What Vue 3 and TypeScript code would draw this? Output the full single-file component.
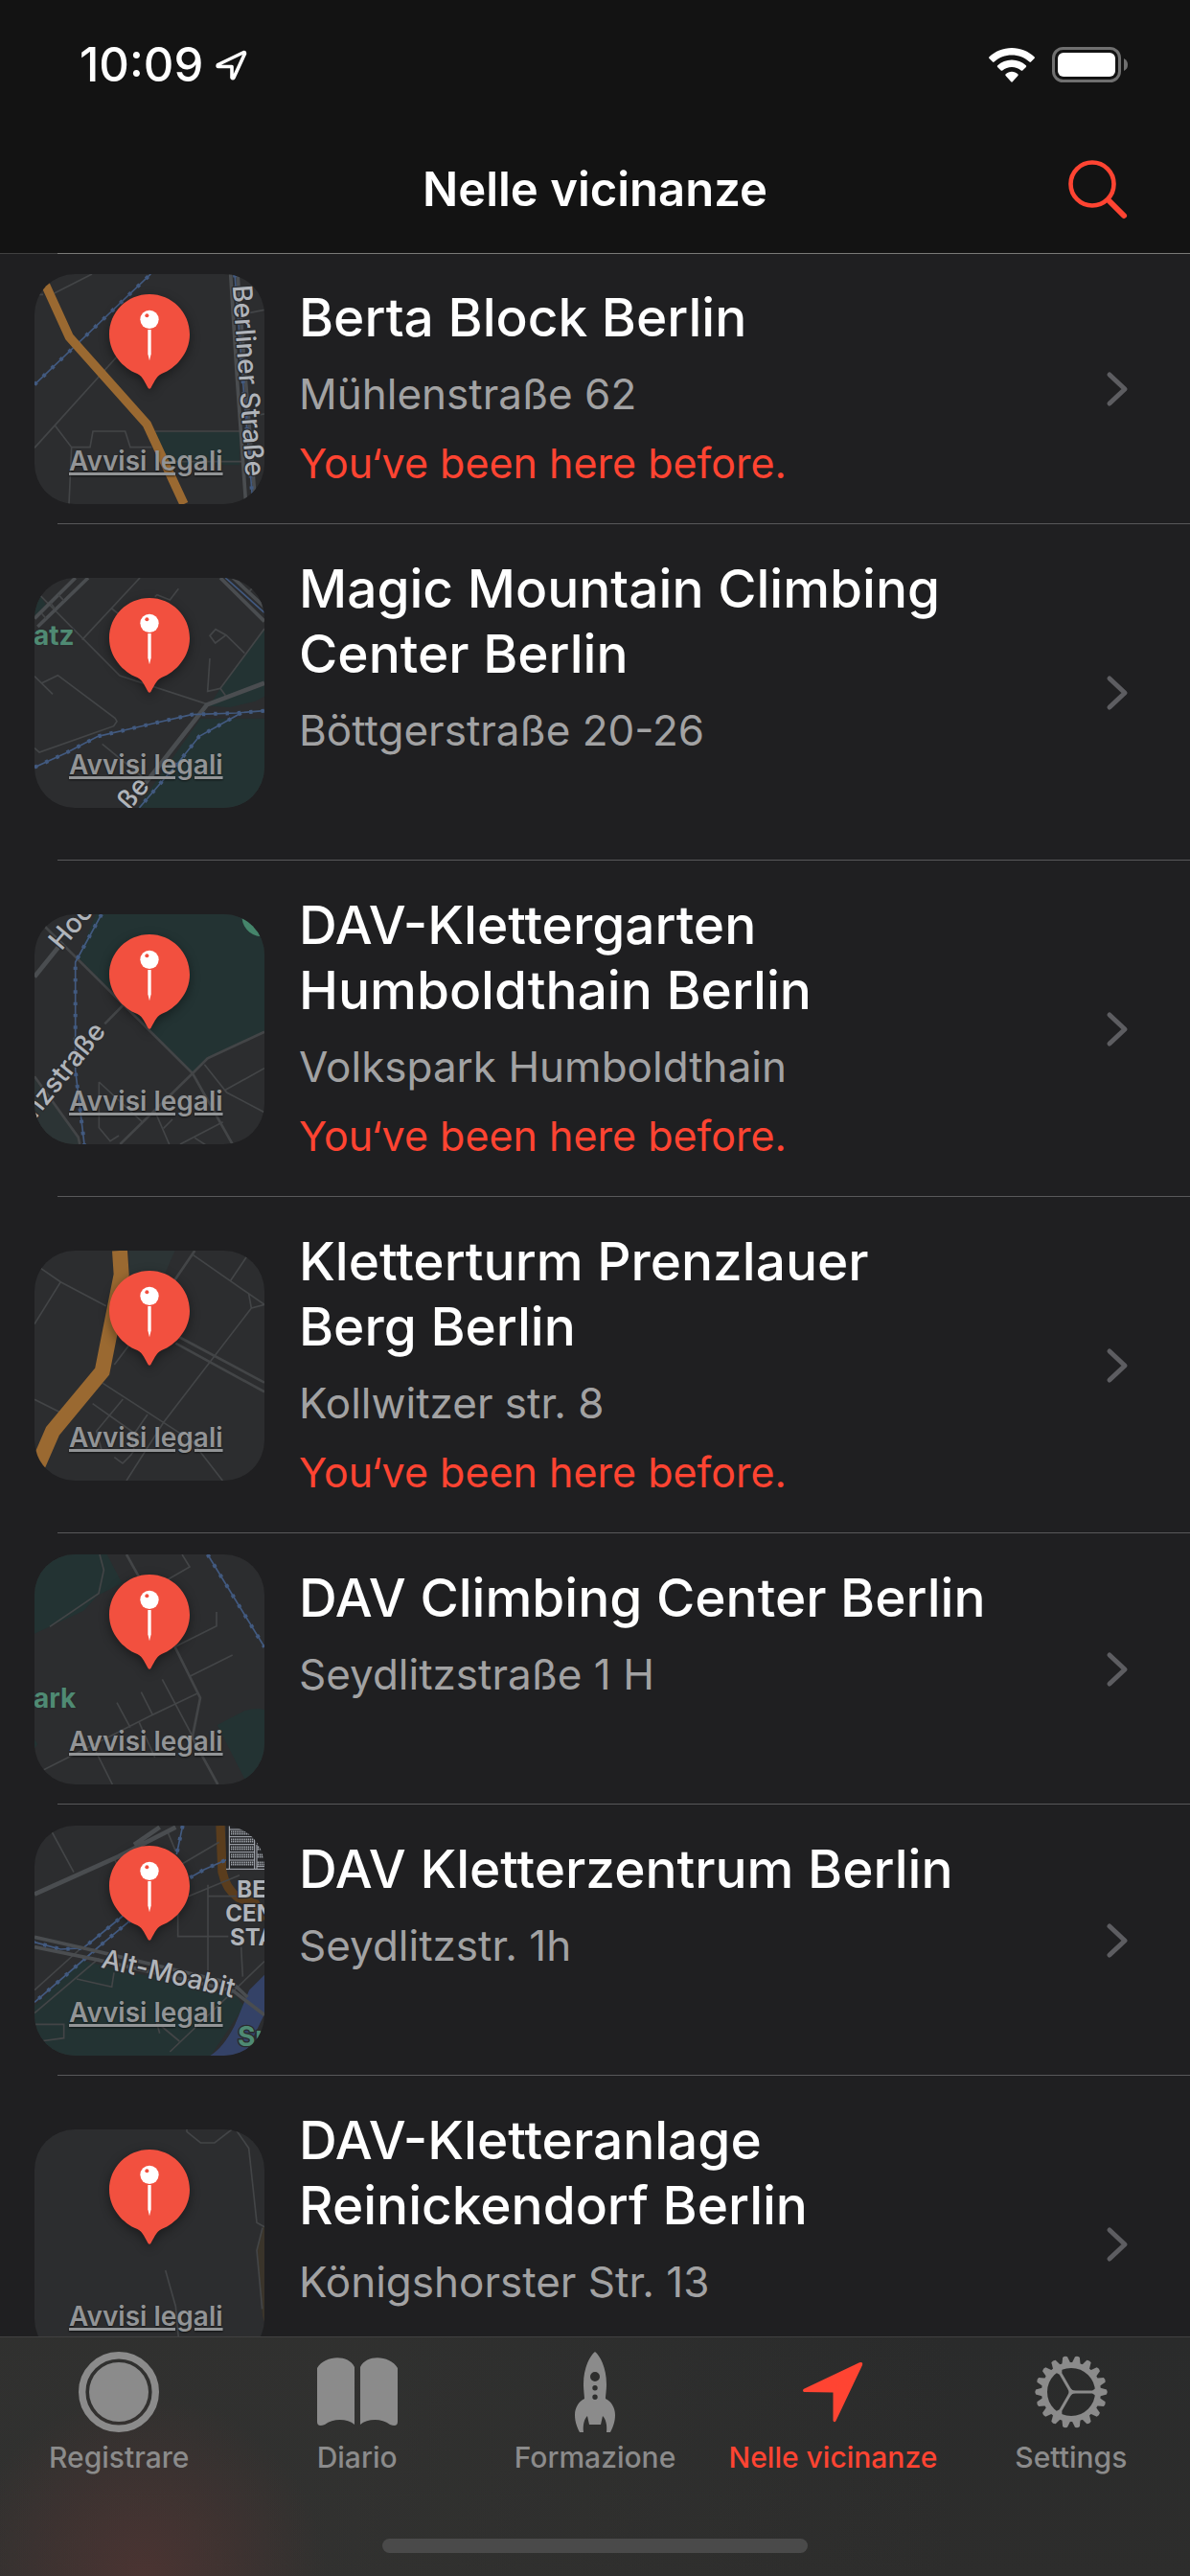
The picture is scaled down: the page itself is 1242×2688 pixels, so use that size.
<script setup lang="ts">
interface Shape {
  kind: string
  d: string
}
interface MapLabel {
  text: string
  x: number
  y: number
  angle: number
  kind: string
}
interface Place {
  lines: string[]
  address: string
  visited: boolean
  top: number
  shapes: Shape[]
  labels: MapLabel[]
}

// A rail line is a thin stroke with evenly spaced ticks laid over it.
const rail = (d: string): Shape[] => [
  { kind: 'rail', d },
  { kind: 'ticks', d },
]

const windows = (x0: number, x1: number, y0: number, y1: number): string => {
  let d = ''
  for (let y = y0; y < y1; y += 24) {
    d += `M${x0} ${y}H${x1}M${x0} ${y + 7}H${x1}`
  }
  return d
}

const places: Place[] = [
  {
    lines: ['Berta Block Berlin'],
    address: 'Mühlenstraße 62',
    visited: true,
    top: 78,
    shapes: [
      { kind: 'green', d: 'M480 572H750V676H530Z' },
      { kind: 'minor', d: 'M108 142H135M170 138L288 78M108 622L372 330M172 552L224 620H282L291 570H392L408 620H475M224 620L216 798M486 570H752M540 665H760M782 199L828 190M815 518L828 516' },
      { kind: 'major', d: 'M722 78L742 400L770 798M744 78L770 420L800 798' },
      ...rail('M108 424L472 78'),
      ...rail('M735 78L762 430L792 798'),
      { kind: 'orange', d: 'M140 106L217 275L460 548L576 798' },
    ],
    labels: [{ text: 'Berliner Straße', x: 728, y: 114, angle: 86, kind: 'street' }],
  },
  {
    lines: ['Magic Mountain Climbing', 'Center Berlin'],
    address: 'Böttgerstraße 20-26',
    visited: false,
    top: 69,
    shapes: [
      { kind: 'green', d: 'M108 115L123 121L144 152L108 190ZM828 228L690 415L655 470L720 474L800 455L828 440ZM628 509H828V789H430Z' },
      { kind: 'minor', d: 'M123 121L375 375L645 463M438 69L257 263M350 165L400 205M485 128L492 122L532 138L559 103M828 228L690 415L706 437M690 415L650 424L657 321M766 305L708 248L675 230L657 250L674 273L708 248M108 377L165 433M131 398L181 374L360 508L366 518L356 533L123 615L108 602M320 589L462 705M780 112L794 97' },
      { kind: 'major', d: 'M236 69L108 196M276 69L118 222M690 69L828 205M730 69L828 160' },
      { kind: 'wide', d: 'M828 398L648 466L452 716' },
      { kind: 'minor', d: 'M183 122L200 140M158 148L172 165M130 180L144 196' },
      ...rail('M108 662L205 618L307 565L440 534L600 497L740 492L828 485'),
      ...rail('M755 492L624 565L560 645L436 789'),
      { kind: 'rail', d: 'M706 69L828 178' },
    ],
    labels: [
      { text: 'atz', x: 105, y: 280, angle: 0, kind: 'park' },
      { text: 'ße', x: 404, y: 800, angle: -49, kind: 'street' },
    ],
  },
  {
    lines: ['DAV-Klettergarten', 'Humboldthain Berlin'],
    address: 'Volkspark Humboldthain',
    visited: true,
    top: 72,
    shapes: [
      { kind: 'green', d: 'M300 72H828V440L650 523L603 570L245 208Z' },
      { kind: 'faint', d: 'M108 580L245 770L250 792H108Z' },
      { kind: 'poi', d: 'M758 72H828V141A62 62 0 0 1 758 86Z' },
      { kind: 'road', d: 'M135 105L603 570L728 792M828 440L650 523L603 570L376 792M328 415L385 357M108 580L245 770L250 792' },
      { kind: 'wide', d: 'M108 268L195 160' },
      { kind: 'minor', d: 'M640 542L710 630L828 692M706 622L828 554M310 597V740L345 782L372 765M310 597L445 722M485 688L530 792M512 742L540 714M564 792L698 722M610 772L644 794' },
      ...rail('M318 72L236 222V560L264 792'),
    ],
    labels: [
      { text: 'Hoc', x: 192, y: 188, angle: -50, kind: 'street' },
      { text: 'nzstraße', x: 112, y: 714, angle: -51, kind: 'street' },
    ],
  },
  {
    lines: ['Kletterturm Prenzlauer', 'Berg Berlin'],
    address: 'Kollwitzer str. 8',
    visited: true,
    top: 75,
    shapes: [
      { kind: 'faint', d: 'M405 75H548L515 150H405Z' },
      { kind: 'minor', d: 'M123 127L190 173L332 248M190 173L108 305M605 89L828 244L787 255L779 211M775 90L721 170M787 255L512 613L396 795M512 613L322 490M512 613L600 670L697 795M108 541L190 582M385 540L302 640L318 698M290 554L440 660M462 588L412 660L420 700L410 715L384 741L358 722M405 370L358 432' },
      { kind: 'road', d: 'M610 75L545 170M560 345L828 488M550 365L828 517' },
      { kind: 'orangeWide', d: 'M375 75L380 150L320 453L165 640L115 755' },
    ],
    labels: [],
  },
  {
    lines: ['DAV Climbing Center Berlin'],
    address: 'Seydlitzstraße 1 H',
    visited: false,
    top: 66,
    shapes: [
      { kind: 'green', d: 'M108 66H335L382 156L305 195L262 242L108 314ZM680 600L765 556Q800 545 828 552V786H775ZM108 645L118 660L108 675Z' },
      { kind: 'minor', d: 'M312 66L325 115L309 188L156 292M570 66L594 105L525 145M794 92L822 134M678 246V290L550 354M728 381L594 448M508 457L600 630M442 497L478 568L620 500M366 530L408 608M478 568L128 745M436 592L485 702M300 682L352 786' },
      { kind: 'road', d: 'M396 66L440 145M545 350L627 515L602 640L682 786' },
      ...rail('M650 66L828 356'),
    ],
    labels: [{ text: 'ark', x: 105, y: 546, angle: 0, kind: 'park' }],
  },
  {
    lines: ['DAV Kletterzentrum Berlin'],
    address: 'Seydlitzstr. 1h',
    visited: false,
    top: 75,
    shapes: [
      { kind: 'green', d: 'M108 640L258 498L740 610L765 640L660 795H108Z' },
      { kind: 'water', d: 'M828 542L780 590Q760 640 735 700Q700 770 658 795H765L828 665Z' },
      { kind: 'brown', d: 'M690 75L696 220Q708 275 745 300L800 320L828 370' },
      { kind: 'minor', d: 'M160 90L231 221M355 175L375 210M525 95L550 155M686 127L570 195M590 296L750 230M557 350V422H715M651 260V530M651 296H740M755 455L760 548M108 590L250 462M108 662L310 490M240 555L350 580L357 535M828 500L532 783M490 690L500 725M490 690L562 750M108 697H200V740L125 750' },
      ...rail('M572 75L553 165M595 238L640 212L708 182M400 345L290 435L260 458L190 462L108 440M410 370L300 462L108 628'),
      { kind: 'wide', d: 'M108 290L370 172L550 80M420 135L500 80' },
      { kind: 'major', d: 'M108 424L260 458L730 570L775 612M108 455L300 494L730 592L828 668' },
      { kind: 'shade', d: 'M708 75H828V212H708Z' },
      { kind: 'poster', d: 'M708 211H828M718 75V210M797 75V210M718 87H797M718 110H797M718 134H797M718 158H797M718 183H797M804 132L814 127M804 135V210M804 203H828' },
      { kind: 'windows', d: windows(723, 793, 94, 205) + windows(806, 828, 142, 205) },
    ],
    labels: [
      { text: 'BE', x: 742, y: 299, angle: 0, kind: 'station' },
      { text: 'CEN', x: 706, y: 374, angle: 0, kind: 'station' },
      { text: 'STA', x: 720, y: 450, angle: 0, kind: 'station' },
      { text: 'Alt-Moabit', x: 314, y: 518, angle: 13, kind: 'street' },
      { text: 'Sp', x: 744, y: 766, angle: 0, kind: 'park' },
    ],
  },
  {
    lines: ['DAV-Kletteranlage', 'Reinickendorf Berlin'],
    address: 'Königshorster Str. 13',
    visited: false,
    top: 96,
    shapes: [
      { kind: 'sand', d: 'M828 400L820 404L804 475L822 680L828 700Z' },
      { kind: 'minor', d: 'M585 96V103L628 138H672L726 96M738 96L779 155L804 388L828 401M822 404L804 475L821 658M518 537L550 650L560 760' },
    ],
    labels: [],
  },
]

const tabs = [
  { id: 'record', label: 'Registrare' },
  { id: 'diary', label: 'Diario' },
  { id: 'training', label: 'Formazione' },
  { id: 'nearby', label: 'Nelle vicinanze' },
  { id: 'settings', label: 'Settings' },
]

const teeth = Array.from({ length: 18 }, (_, i) => i * 20)
</script>

<template>
  <div class="app">
    <header class="top">
      <div class="status">
        <div class="clock">
          <span>10:09</span>
          <svg width="34" height="34" viewBox="0 0 34 34" aria-hidden="true">
            <path d="M30.500 3.500L3.500 16.500Q2.500 18.500 4 18.500H18V30Q19 31.500 20 30L31.500 5Q31.500 3.500 30.500 3.500Z" fill="none" stroke="#fff" stroke-width="3.600" stroke-linejoin="round" />
          </svg>
        </div>
        <div class="power">
          <svg width="48" height="36" viewBox="0 0 48 36" aria-hidden="true">
            <path fill="#fff" d="M24 0C33 0 41.500 3.500 47.500 9.300Q48.300 10.100 47.500 11L44 14.600Q43.200 15.300 42.400 14.600C37.400 10 31 7.500 24 7.500S10.600 10 5.600 14.600Q4.800 15.300 4 14.600L.5 11Q-.3 10.100 .5 9.300C6.500 3.500 15 0 24 0Z" />
            <path fill="#fff" d="M24 12.400C29.600 12.400 34.800 14.500 38.800 18.200Q39.700 19 38.900 19.900L35.300 23.500Q34.500 24.200 33.700 23.500C31 21.200 27.700 19.900 24 19.900S17 21.200 14.300 23.500Q13.500 24.200 12.700 23.500L9.100 19.900Q8.300 19 9.200 18.200C13.200 14.500 18.400 12.400 24 12.400Z" />
            <path fill="#fff" d="M24 24.800C26.400 24.800 28.600 25.700 30.300 27.200Q31.200 28 30.400 28.900L24.800 35.300Q24 36 23.200 35.300L17.600 28.900Q16.800 28 17.700 27.200C19.400 25.700 21.600 24.800 24 24.800Z" />
          </svg>
          <svg width="80" height="38" viewBox="0 0 80 38" aria-hidden="true">
            <rect x="1.500" y="1.500" width="69" height="34" rx="10" fill="none" stroke="#707070" stroke-width="3" />
            <rect x="6" y="6" width="60" height="25" rx="6" fill="#fff" />
            <path d="M75 12Q79 14 79 18.500T75 25Z" fill="#707070" />
          </svg>
        </div>
      </div>
      <div class="nav">
        <h1>Nelle vicinanze</h1>
        <button class="search" type="button" aria-label="Cerca">
          <svg width="64" height="64" viewBox="0 0 64 64" aria-hidden="true">
            <circle cx="26" cy="26" r="22.500" fill="none" stroke="#ff4432" stroke-width="4.600" />
            <path d="M43 43L59 59" stroke="#ff4432" stroke-width="6" stroke-linecap="round" />
          </svg>
        </button>
      </div>
    </header>

    <main class="content">
      <ul class="list">
        <li v-for="place in places" :key="place.lines[0]" class="row">
          <div class="thumb">
            <svg class="map" :viewBox="`108 ${place.top} 720 720`" aria-hidden="true">
              <path v-for="(shape, i) in place.shapes" :key="i" :class="shape.kind" :d="shape.d" />
              <text
                v-for="label in place.labels"
                :key="label.text"
                :class="['label', label.kind]"
                :transform="`translate(${label.x} ${label.y}) rotate(${label.angle})`"
              >{{ label.text }}</text>
            </svg>
            <svg class="pin" viewBox="0 0 720 720" aria-hidden="true">
              <path class="drop" d="M360 63C430 63 486 119 486 189C486 247 443 295 398 312C380 320 373 343 364 357Q360 362 356 357C347 343 340 320 322 312C277 295 234 247 234 189C234 119 290 63 360 63Z" />
              <circle cx="360" cy="142" r="29" fill="#fff" />
              <circle cx="352" cy="130" r="6" fill="#f2503f" />
              <path d="M355 174H365V250L360 271L355 250Z" fill="#fff" />
            </svg>
            <a class="legal" href="#legal">Avvisi legali</a>
          </div>
          <a class="link" href="#place">
            <div class="info">
              <h2><span v-for="line in place.lines" :key="line">{{ line }}</span></h2>
              <div class="details">
                <p>{{ place.address }}</p>
                <p v-if="place.visited" class="visited">You‘ve been here before.</p>
              </div>
            </div>
            <svg class="chevron" width="24" height="38" viewBox="0 0 24 38" aria-hidden="true">
              <path d="M4 4L20 19L4 34" fill="none" stroke="#5d5d61" stroke-width="5" stroke-linecap="round" stroke-linejoin="round" />
            </svg>
          </a>
        </li>
      </ul>
    </main>

    <nav class="tabbar">
      <div class="tabs">
        <a v-for="tab in tabs" :key="tab.id" :href="`#${tab.id}`" :class="['tab', { active: tab.id === 'nearby' }]">
          <svg width="84" height="84" viewBox="0 0 84 84" fill="currentColor" aria-hidden="true">
            <template v-if="tab.id === 'record'">
              <circle cx="42" cy="42" r="38.300" fill="none" stroke="currentColor" stroke-width="7.400" />
              <circle cx="42" cy="42" r="31" />
            </template>
            <template v-else-if="tab.id === 'diary'">
              <path d="M0 17C8 4 32 2 39 16V76C32 70 17 69 8 76Q0 79 0 73Z" />
              <path d="M84 17C76 4 52 2 45 16V76C52 70 67 69 76 76Q84 79 84 73Z" />
            </template>
            <path
              v-else-if="tab.id === 'training'"
              fill-rule="evenodd"
              d="M42 0C47 4 54 16 54 34C54 40 53 46 53 49C59 52 63 58 63 66C63 74 60 80 58 84H54C55 76 53 70 50 67L48 76H36L34 67C31 70 29 76 30 84H26C24 80 21 74 21 66C21 58 25 52 31 49C31 46 30 40 30 34C30 16 37 4 42 0ZM42 21A5 5 0 1 0 42 31A5 5 0 1 0 42 21ZM42 35A2.700 2.700 0 1 0 42 40.400A2.700 2.700 0 1 0 42 35ZM42 44.500A2.700 2.700 0 1 0 42 49.900A2.700 2.700 0 1 0 42 44.500Z"
            />
            <path v-else-if="tab.id === 'nearby'" d="M70 11.200Q74 10 73 14L45.500 72Q44 74.500 42.500 72V42.500L12 42Q10 40.500 12 38.800Z" />
            <template v-else>
              <circle cx="42" cy="42" r="28" fill="none" stroke="currentColor" stroke-width="6" />
              <path v-for="angle in teeth" :key="angle" d="M70 37L79 39.500Q80.500 42 79 44.500L70 47Z" :transform="`rotate(${angle} 42 42)`" />
              <path
                v-for="angle in [0, 120, 240]"
                :key="`spoke${angle}`"
                d="M42 39.600Q44 40.500 47 40.500H64L68 38V46L64 43.500H47Q44 43.500 42 44.400Z"
                :transform="`rotate(${angle} 42 42)`"
              />
            </template>
          </svg>
          <span>{{ tab.label }}</span>
        </a>
      </div>
      <div class="home"></div>
    </nav>
  </div>
</template>

<style>
body {
  margin: 0;
  background: #1f1f21;
}
</style>

<style scoped>
.app {
  display: flex;
  flex-direction: column;
  height: 100vh;
  overflow: hidden;
  color: #fff;
  background: #1f1f21;
  font-family: Inter, "Liberation Sans", sans-serif;
}

a {
  color: inherit;
  text-decoration: none;
}

h1,
h2,
p,
ul {
  margin: 0;
  padding: 0;
}

.top {
  position: relative;
  z-index: 1;
  flex: none;
  background: #131313;
}

.top::after {
  content: "";
  position: absolute;
  top: 100%;
  left: 0;
  right: 0;
  height: 1px;
  background: linear-gradient(90deg, #404040 60px, #7a7a78 60px);
}

.status {
  display: flex;
  justify-content: space-between;
  align-items: center;
  height: 128px;
  padding: 4px 64px 0 83px;
}

.clock {
  display: flex;
  align-items: center;
  gap: 12px;
  font-size: 49px;
  font-weight: 500;
  line-height: 60px;
}

.power {
  display: flex;
  align-items: center;
  gap: 18px;
}

.nav {
  display: grid;
  grid-template-columns: 1fr auto 1fr;
  align-items: center;
  height: 132px;
  padding: 0 64px;
}

h1 {
  grid-column: 2;
  font-size: 49px;
  font-weight: 600;
  line-height: 60px;
}

.search {
  justify-self: end;
  display: flex;
  padding: 0;
  border: 0;
  background: none;
}

.content {
  flex: 1;
  min-height: 0;
  overflow: hidden;
}

.list {
  list-style: none;
}

.row {
  position: relative;
  display: flex;
  align-items: center;
  gap: 36px;
  padding: 22px 64px 21px 36px;
}

.row::after {
  content: "";
  position: absolute;
  left: 60px;
  right: 0;
  bottom: 0;
  height: 1px;
  background: #58585a;
}

.thumb {
  position: relative;
  flex: none;
  width: 240px;
  height: 240px;
  overflow: hidden;
  border-radius: 42px;
  background: #2c2d2f;
}

.map {
  display: block;
  width: 100%;
  height: 100%;
  fill: none;
}

.pin {
  position: absolute;
  inset: 0;
}

.drop {
  fill: #f2503f;
  filter: drop-shadow(0 10px 16px rgba(0, 0, 0, 0.4));
}

.minor {
  stroke: #434547;
  stroke-width: 5;
}

.road {
  stroke: #434547;
  stroke-width: 8;
}

.major {
  stroke: #4a4d50;
  stroke-width: 11;
}

.wide {
  stroke: #4a4d50;
  stroke-width: 14;
}

.rail {
  stroke: #425a80;
  stroke-width: 5;
}

.ticks {
  stroke: #425a80;
  stroke-width: 12;
  stroke-dasharray: 10 27;
}

.orange {
  stroke: #9a6931;
  stroke-width: 28;
}

.orangeWide {
  stroke: #9a6931;
  stroke-width: 48;
}

.brown {
  stroke: #5a3d1d;
  stroke-width: 28;
}

.green {
  fill: #233333;
}

.faint {
  fill: #2c3435;
}

.sand {
  fill: #3a342a;
}

.water {
  fill: #344267;
}

.poi {
  fill: #45856b;
}

.shade {
  fill: #242528;
}

.poster {
  stroke: #b0b5bd;
  stroke-width: 3;
}

.windows {
  stroke: #9ea3aa;
  stroke-width: 5;
  stroke-dasharray: 4 2;
}

.label {
  font-size: 84px;
  font-weight: 500;
  fill: #b0b4ba;
  stroke: #2a2b2d;
  stroke-width: 8;
  stroke-linejoin: round;
  paint-order: stroke;
}

.station {
  font-size: 72px;
  font-weight: 700;
}

.park {
  font-weight: 700;
  fill: #4f8a73;
}

.legal {
  position: absolute;
  left: 36px;
  top: 179px;
  color: #929496;
  font-size: 28px;
  font-weight: 600;
  line-height: 32px;
  white-space: nowrap;
  text-decoration: underline;
  text-decoration-thickness: 3px;
  text-underline-offset: 2px;
  text-shadow: 0 1px 2px rgba(0, 0, 0, 0.6);
}

.link {
  display: flex;
  flex: 1;
  align-items: center;
  justify-content: space-between;
  min-width: 0;
}

.info {
  padding: 11px 0 7px;
}

h2 {
  font-size: 55px;
  font-weight: 500;
  line-height: 68px;
}

h2 span {
  display: block;
}

.details {
  min-height: 144px;
  margin-top: 10px;
  color: #a2a2a3;
  font-size: 44px;
  line-height: 72px;
}

.visited {
  color: #ff4432;
  font-size: 43px;
}

.chevron {
  flex: none;
}

.tabbar {
  position: relative;
  flex: none;
  display: flex;
  flex-direction: column;
  align-items: center;
  justify-content: space-between;
  height: 225px;
  padding-bottom: 24px;
  border-top: 1px solid #414141;
  background:
    radial-gradient(circle 190px at 150px 250px, #4b3432, rgba(75, 52, 50, 0)),
    linear-gradient(90deg, rgba(52, 52, 50, 0.6) 30%, rgba(43, 43, 43, 0) 80%),
    linear-gradient(#2a2b2b, #2d2d2c);
}

.tabs {
  display: flex;
  align-self: stretch;
}

.tab {
  display: flex;
  flex: 1;
  flex-direction: column;
  align-items: center;
  gap: 6px;
  padding-top: 15px;
  color: #8b8b8b;
  font-size: 30px;
  font-weight: 500;
  line-height: 40px;
  white-space: nowrap;
}

.active {
  color: #ff4432;
}

.home {
  width: 444px;
  height: 15px;
  border-radius: 8px;
  background: #4a4a4a;
}
</style>
